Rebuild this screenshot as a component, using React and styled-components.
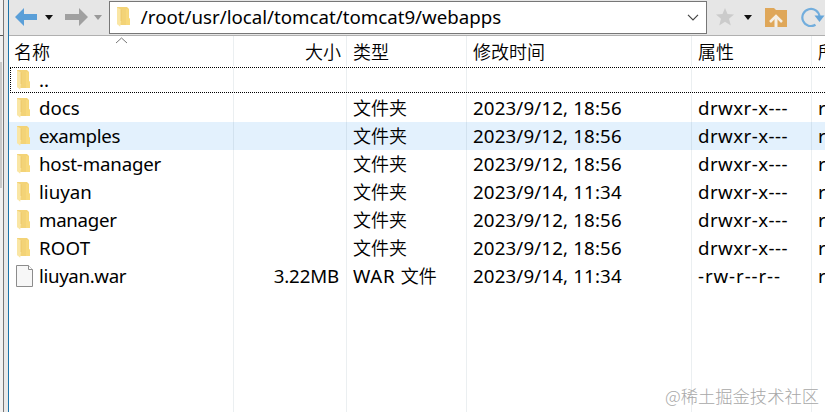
import React from 'react'
import styled, { createGlobalStyle } from 'styled-components';

const GlobalStyle = createGlobalStyle`
  * {
    box-sizing: border-box;
  }
  body {
    margin: 0;
    overflow: hidden;
    background: #fff;
    color: #000;
    font-family: "Noto Sans", "Noto Sans CJK SC", sans-serif;
  }
  svg {
    display: block;
    flex: none;
  }
`;

const Window = styled.div`
  display: flex;
  width: 825px;
  height: 412px;
  overflow: hidden;
  position: relative;
`;

const Sash = styled.div`
  width: 4px;
  flex: none;
  background: #f1f1f1;
  border-right: 1px solid #777;
`;

const SashTop = styled.div`
  height: 36px;
  border-bottom: 1px solid #555;
`;

const SashThumb = styled.div`
  width: 2px;
  height: 126px;
  margin-top: 26px;
  background: #c9c9c9;
`;

const Gutter = styled.div`
  width: 5px;
  flex: none;
  background: #e9e9e9;
  border-right: 1px solid #1c74aa;
`;

const Panel = styled.div`
  flex: 1;
  min-width: 0;
  display: flex;
  flex-direction: column;
`;

const Toolbar = styled.div`
  display: flex;
  align-items: center;
  flex: none;
  height: 36px;
  padding: 0 0 1px 6px;
  background: #e6e6e6;
  border-bottom: 1px solid #b0b0b0;
`;

const NavButtons = styled.div`
  display: flex;
  align-items: center;
  width: 94px;
`;

const Address = styled.div`
  display: flex;
  align-items: center;
  width: 599px;
  height: 33px;
  padding: 0 7px 0 6px;
  background: #fff;
  border: 1px solid #777;
`;

const Actions = styled.div`
  display: flex;
  align-items: center;
  padding-left: 9px;
`;

const Label = styled.span`
  font-size: 18.7px;
  line-height: 24px;
  letter-spacing: ${(props) => props.spacing || 0}px;
  white-space: pre;
`;

const Cjk = styled.span`
  font-family: "Noto Sans CJK SC", sans-serif;
  font-size: 18px;
  font-weight: 350;
  line-height: 24px;
  white-space: pre;
  padding-bottom: 2px;
`;

const Path = styled(Label)`
  flex: 1;
  margin-left: 10px;
`;

const Table = styled.div`
  flex: 1;
  display: flex;
  flex-direction: column;
`;

const Row = styled.div`
  display: grid;
  grid-template-columns: 225px 113px 120px 225px 120px 13px;
  flex: none;
  height: 28px;
  background: ${(props) => (props.hovered ? '#e3f1fd' : 'transparent')};
`;

const HeaderRow = styled(Row)`
  height: 30px;
`;

const FocusRow = styled(Row)`
  border: 1px dotted #000;
  height: 26px;
  margin: 1px 0 1px 1px;
  grid-template-columns: 223px 113px 120px 225px 120px 13px;
  border-right: 0;
`;

const Filler = styled(Row)`
  flex: 1;
`;

const Cell = styled.div`
  display: flex;
  align-items: center;
  justify-content: ${(props) => (props.right ? 'flex-end' : 'flex-start')};
  min-width: 0;
  overflow: hidden;
  padding: 0 ${(props) => (props.right ? 7 : 0)}px 0 6px;
  border-right: 1px solid rgba(100, 130, 150, 0.13);
  &:last-child {
    border-right: 0;
  }
`;

const HeaderCell = styled(Cell)`
  position: relative;
  padding-top: 2px;
  padding-right: ${(props) => (props.right ? 5 : 0)}px;
`;

const NameHeader = styled(HeaderCell)`
  padding-left: 5px;
`;

const FocusCell = styled(Cell)`
  padding-left: 5px;
`;

const SortArrow = styled.svg`
  position: absolute;
  left: 106px;
  top: 1px;
`;

const Name = styled.div`
  display: flex;
  align-items: center;
  gap: ${(props) => props.gap}px;
  padding-left: 1px;
`;

const Watermark = styled.div`
  position: absolute;
  right: 6px;
  bottom: 4px;
  font-family: "Noto Sans CJK SC", sans-serif;
  font-size: 17.3px;
  font-weight: 300;
  line-height: 24px;
  color: #a8a8a8;
  white-space: nowrap;
`;

const Folder = () => (
  <svg width="15" height="20" viewBox="0 0 15 20">
    <path d="M1 0h10l2 2v9l1 1v6H5L1 17z" fill="#f3d377" />
    <path d="M10 2h2.5v9l1.5 1v6h-4z" fill="#f8d97c" />
    <path d="M1 .5l4 2V14l-.8 5.8L1 17z" fill="#fae6a4" />
    <path d="M5 2.5V14" stroke="#e9c263" strokeWidth=".7" />
  </svg>
)

const FileIcon = () => (
  <svg width="17" height="22" viewBox="0 0 17 22">
    <path d="M.5.5h12l4 4v17H.5z" fill="#f7f7f7" stroke="#8c8c8c" />
    <path d="M12.5.5v4h4" fill="#fff" stroke="#8c8c8c" />
  </svg>
)

const Caret = ({ color }) => (
  <svg width="8" height="5" viewBox="0 0 8 5">
    <path d="M0 0h8L4 5z" fill={color} />
  </svg>
)

const Gap = styled.div`
  width: ${(props) => props.w}px;
  flex: none;
`;

const files = [
  { name: 'docs', date: '2023/9/12, 18:56' },
  { name: 'examples', date: '2023/9/12, 18:56', spacing: -0.35, hovered: true },
  { name: 'host-manager', date: '2023/9/12, 18:56', spacing: -0.18 },
  { name: 'liuyan', date: '2023/9/14, 11:34' },
  { name: 'manager', date: '2023/9/12, 18:56', spacing: -0.3 },
  { name: 'ROOT', date: '2023/9/12, 18:56', spacing: 0.2 },
  { name: 'liuyan.war', date: '2023/9/14, 11:34', spacing: -0.35, size: '3.22MB' },
]

const App = () => {
  return (
    <>
      <GlobalStyle />
      <Window>
        <Sash>
          <SashTop />
          <SashThumb />
        </Sash>
        <Gutter />
        <Panel>
          <Toolbar>
            <NavButtons>
              <svg width="22" height="18" viewBox="0 0 22 18">
                <path d="M0 9L9 0v6h13v6H9v6z" fill="#5a9fd8" />
              </svg>
              <Gap w={8} />
              <Caret color="#111" />
              <Gap w={12} />
              <svg width="23" height="18" viewBox="0 0 23 18">
                <path d="M23 9L14 0v6H0v6h14v6z" fill="#a0a0a0" />
              </svg>
              <Gap w={6} />
              <Caret color="#999" />
            </NavButtons>
            <Address>
              <Folder />
              <Path>/root/usr/local/tomcat/tomcat9/webapps</Path>
              <svg width="12" height="7" viewBox="0 0 12 7">
                <path d="M1 .8l5 5 5-5" fill="none" stroke="#444" strokeWidth="1.2" />
              </svg>
            </Address>
            <Actions>
              <svg width="18" height="18" viewBox="0 0 18 18">
                <path d="M9 0l2.5 6 6.5.5-5 4.2 1.8 6.8L9 13.8l-5.8 3.7L5 10.7 0 6.5 6.5 6z" fill="#cbcbcb" />
              </svg>
              <Gap w={10} />
              <Caret color="#111" />
              <Gap w={13} />
              <svg width="22" height="19" viewBox="0 0 22 19">
                <path d="M0 0h9l2 2h11v17H0z" fill="#dfa759" />
                <path d="M5 14l6-6 6 6" fill="none" stroke="#f5efe5" strokeWidth="2.5" />
                <path d="M11 9v10" stroke="#f5efe5" strokeWidth="3" />
              </svg>
              <Gap w={14} />
              <svg width="24" height="20" viewBox="0 0 24 20">
                <path d="M14.5 17.8A8.6 8.6 0 1 1 18.5 9.5" fill="none" stroke="#73aedd" strokeWidth="2.2" />
                <path d="M13.5 8.5h10l-5 6.5z" fill="#65a5d9" />
              </svg>
            </Actions>
          </Toolbar>
          <Table>
            <HeaderRow>
              <NameHeader>
                <Cjk>名称</Cjk>
                <SortArrow width="13" height="7" viewBox="0 0 13 7">
                  <path d="M1 6l5.5-5L12 6" fill="none" stroke="#777" />
                </SortArrow>
              </NameHeader>
              <HeaderCell right><Cjk>大小</Cjk></HeaderCell>
              <HeaderCell><Cjk>类型</Cjk></HeaderCell>
              <HeaderCell><Cjk>修改时间</Cjk></HeaderCell>
              <HeaderCell><Cjk>属性</Cjk></HeaderCell>
              <HeaderCell><Cjk>所</Cjk></HeaderCell>
            </HeaderRow>
            <FocusRow>
              <FocusCell>
                <Folder />
                <Gap w={8} />
                <Label>..</Label>
              </FocusCell>
              <Cell />
              <Cell />
              <Cell />
              <Cell />
              <Cell />
            </FocusRow>
            {files.map((file) => (
              <Row key={file.name} hovered={file.hovered}>
                <Cell>
                  <Name gap={file.size ? 6 : 8}>
                    {file.size ? <FileIcon /> : <Folder />}
                    <Label spacing={file.spacing}>{file.name}</Label>
                  </Name>
                </Cell>
                <Cell right><Label spacing={-0.15}>{file.size}</Label></Cell>
                <Cell>
                  {file.size && <Label spacing={0.7}>WAR </Label>}
                  <Cjk>{file.size ? '文件' : '文件夹'}</Cjk>
                </Cell>
                <Cell><Label spacing={0.15}>{file.date}</Label></Cell>
                <Cell>
                  <Label spacing={file.size ? 0.9 : 0.45}>{file.size ? '-rw-r--r--' : 'drwxr-x---'}</Label>
                </Cell>
                <Cell><Label>r</Label></Cell>
              </Row>
            ))}
            <Filler>
              <Cell />
              <Cell />
              <Cell />
              <Cell />
              <Cell />
              <Cell />
            </Filler>
          </Table>
        </Panel>
        <Watermark>@稀土掘金技术社区</Watermark>
      </Window>
    </>
  )
}

export default App
